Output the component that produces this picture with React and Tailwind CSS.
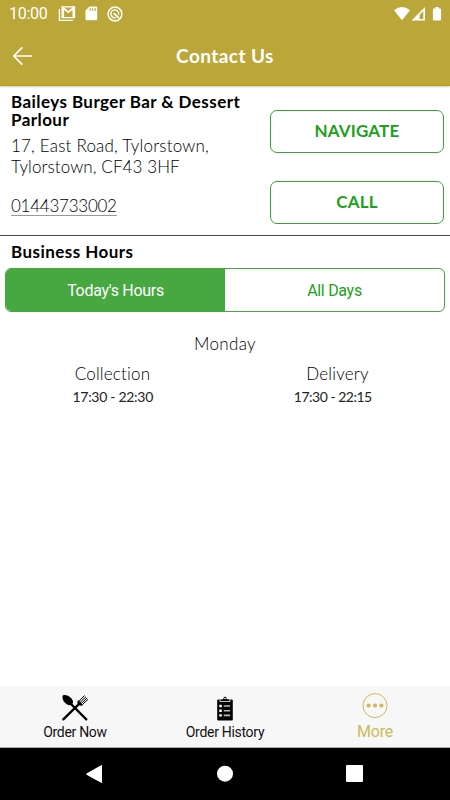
import React, { useState } from "react";

const StatusBar = () => (
  <div className="flex h-[27px] items-center justify-between pl-[9px] pr-[7px] text-white">
    <div className="flex items-center">
      <span className="w-[49px] font-['Roboto',sans-serif] text-[16px] font-normal leading-[26px] tracking-[-0.3px]">10:00</span>
      <svg width="18" height="16" viewBox="0 0 18 16" fill="none" stroke="currentColor">
        <path d="M1.4 3v11.3h13.4" strokeWidth="1.3" />
        <path d="M4 11.6V.9h12.6v10.7z" strokeWidth="1.1" />
        <path d="M5.2 11.6V2l5.1 4.2L15.4 2v9.6" strokeWidth="1.8" />
      </svg>
      <svg className="ml-[9px]" width="13" height="15" viewBox="0 0 13 15">
        <path d="M4.5.5h6.7q1 0 1 1v11.8q0 1-1 1H1.5q-1 0-1-1V4.5z" fill="currentColor" />
        <path d="M5.2 2v3M7.7 2v3M10.2 2v3" stroke="#bba639" strokeWidth="1.1" />
      </svg>
      <svg className="ml-[9px]" width="16" height="16" viewBox="0 0 16 16" fill="none" stroke="currentColor">
        <circle cx="8" cy="8" r="6.9" strokeWidth="1.5" />
        <path d="M11.6 8.8A3.9 3.9 0 1 0 8.8 11.6" strokeWidth="1.3" />
        <path d="M6.6 7.2l5.2 4.6" strokeWidth="1.8" />
      </svg>
    </div>
    <svg width="50" height="16" viewBox="0 0 50 16" fill="currentColor">
      <path d="M1 4.3Q9 -2.3 17 4.3L9 14.3z" />
      <path d="M32 1v13.5H18.5zM30.3 5.2L26.6 8.8v4.1h3.7z" fillRule="evenodd" />
      <path d="M42.3 1h3.4v1.5h1.6q.8 0 .8.8v10.4q0 .8-.8.8h-6.6q-.8 0-.8-.8V3.3q0-.8.8-.8h1.6z" />
    </svg>
  </div>
);

const Header = () => (
  <header className="h-[86px] border-b border-[#b9a100] bg-[#bba639] shadow-[0_1px_2px_rgba(0,0,0,0.2)]">
    <StatusBar />
    <div className="grid h-[58px] grid-cols-[48px_1fr_48px] items-center text-white">
      <svg className="ml-3" width="20" height="20" viewBox="0 0 20 20" fill="none" stroke="currentColor" strokeWidth="1.7">
        <path d="M10.3 1.3L1.8 10l8.5 8.7M1.8 10H20" />
      </svg>
      <h1 className="pt-px text-center text-[19px] font-bold tracking-[0.43px]">Contact Us</h1>
    </div>
  </header>
);

const ActionButton = ({ children }) => (
  <button className="h-[43px] w-[174px] rounded-[7px] border border-[#36a336] pb-[2px] text-[17px] font-bold tracking-[0.15px] text-[#209f1b]">
    {children}
  </button>
);

const OrderNowIcon = () => (
  <svg width="28" height="28" viewBox="0 0 28 28">
    <g fill="none" stroke="#000" strokeLinecap="round">
      <path d="M10 10L25.3 25.4" strokeWidth="2.3" />
      <path d="M18.6 9.4L2.3 25.4" strokeWidth="2.3" />
      <path d="M18 7.2L23.2 1.8M19.4 8L24.7 3M20.6 9.2L25.9 4.2M21.8 10.2L26.7 5.6" strokeWidth="1" />
    </g>
    <path d="M1.8 1.5C5 -.1 11.2 3.4 12 7.4c.4 2.4-1.4 4.1-3.8 3.8C4.1 10.7.2 5 1.8 1.5z" />
    <path d="M17.3 6.3l5 4.7c-1.7 1.3-3.5.9-4.8-.3-1.3-1.2-1.6-3.1-.2-4.4z" />
  </svg>
);

const OrderHistoryIcon = () => (
  <svg width="18" height="26" viewBox="0 0 18 26">
    <rect x="1.2" y="3.5" width="15.6" height="21" rx="1" />
    <path d="M4 5.5V2.9h3C7 -.3 11 -.3 11 2.9h3v2.6z" stroke="#f7f7f7" strokeWidth=".8" />
    <circle cx="9" cy="2.5" r=".8" fill="#f7f7f7" />
    <path d="M3.3 10h2.5M3.3 14.7h2.5M3.3 19.4h2.5" stroke="#fff" strokeWidth="2.4" />
    <path d="M7.7 10h6.4M7.7 14.7h6.4M7.7 19.4h6.4" stroke="#bbb" strokeWidth="1.6" />
  </svg>
);

const MoreIcon = () => (
  <svg width="26" height="26" viewBox="0 0 26 26" fill="#cdb959">
    <circle cx="13" cy="12.6" r="12" fill="none" stroke="#cdb959" />
    <circle cx="6.6" cy="12.5" r="2.1" />
    <circle cx="13" cy="12.5" r="2.1" />
    <circle cx="19.4" cy="12.5" r="2.1" />
  </svg>
);

const BottomTabs = () => (
  <nav className="grid h-[62px] grid-cols-3 border-b border-[#aaa] bg-[#f7f7f7] font-['Roboto',sans-serif] text-[14px] font-normal tracking-[-0.3px] text-[#111]">
    <div className="flex flex-col items-center pt-2">
      <OrderNowIcon />
      <span className="leading-[20px]">Order Now</span>
    </div>
    <div className="flex flex-col items-center pt-[10px]">
      <OrderHistoryIcon />
      <span className="leading-[20px]">Order History</span>
    </div>
    <div className="flex flex-col items-center pt-[7px] text-[16px] tracking-[-0.2px] text-[#cdb959]">
      <MoreIcon />
      <span className="leading-[26px]">More</span>
    </div>
  </nav>
);

const SystemNav = () => (
  <div className="h-[52px] bg-black">
    <svg width="450" height="52" viewBox="0 0 450 52" fill="#fff">
      <path d="M101 17.2q1-.6 1 .5v16.6q0 1-1 .5l-14.4-8q-1-.7 0-1.4z" />
      <circle cx="225" cy="25.7" r="8" />
      <rect x="346" y="17" width="17" height="17" rx="1" />
    </svg>
  </div>
);

export default function App() {
  const [tab, setTab] = useState("today");

  return (
    <div className="flex h-[800px] w-[450px] flex-col bg-white font-['Lato',sans-serif] font-light text-black">
      <Header />
      <section className="flex h-[150px] justify-between border-b border-[#444] pl-[11px] pr-[6px]">
        <div className="whitespace-nowrap pt-[7px]">
          <h2 className="text-[17px] font-bold leading-[18px] tracking-[0.43px]">
            Baileys Burger Bar &amp; Dessert
            <br />
            Parlour
          </h2>
          <p className="mt-[6px] text-[17px] leading-[21px] tracking-[0.2px]">
            17, East Road, Tylorstown,
            <br />
            <span className="tracking-[0.1px]">Tylorstown, CF43 3HF</span>
          </p>
          <a className="mt-[20px] block w-max border-b border-[#999] text-[17px] leading-[18px] tracking-[-0.25px]">01443733002</a>
        </div>
        <div className="flex flex-col gap-[28px] pt-[24px]">
          <ActionButton>NAVIGATE</ActionButton>
          <ActionButton>CALL</ActionButton>
        </div>
      </section>
      <section className="flex-1">
        <h2 className="pl-[11px] text-[17px] font-bold leading-[32px] tracking-[0.45px]">Business Hours</h2>
        <div className="mx-[5px] grid h-[44px] grid-cols-2 overflow-hidden rounded-[6px] border border-[#47a842] font-['Roboto',sans-serif] text-[16px] font-normal tracking-[-0.3px]">
          <button
            onClick={() => setTab("today")}
            className={tab === "today" ? "bg-[#47a842] pt-[2px] text-white" : "pt-[2px] text-[#209f1b]"}
          >
            Today's Hours
          </button>
          <button
            onClick={() => setTab("all")}
            className={tab === "all" ? "bg-[#47a842] pt-[2px] text-white" : "pt-[2px] text-[#209f1b]"}
          >
            All Days
          </button>
        </div>
        <p className="mt-[20px] text-center text-[17px] leading-[24px] tracking-[0.3px]">Monday</p>
        <div className="mt-[6px] grid grid-cols-2 text-center text-[17px] leading-[24px] tracking-[0.2px]">
          <span>Collection</span>
          <span>Delivery</span>
        </div>
        <div className="grid grid-cols-2 pr-[5px] text-center text-[14px] font-normal leading-[22px] tracking-[-0.3px] text-[#222]">
          <span className="pl-[3px]">17:30 - 22:30</span>
          <span className="pr-[2px] tracking-[-0.5px]">17:30 - 22:15</span>
        </div>
      </section>
      <BottomTabs />
      <SystemNav />
    </div>
  );
}
